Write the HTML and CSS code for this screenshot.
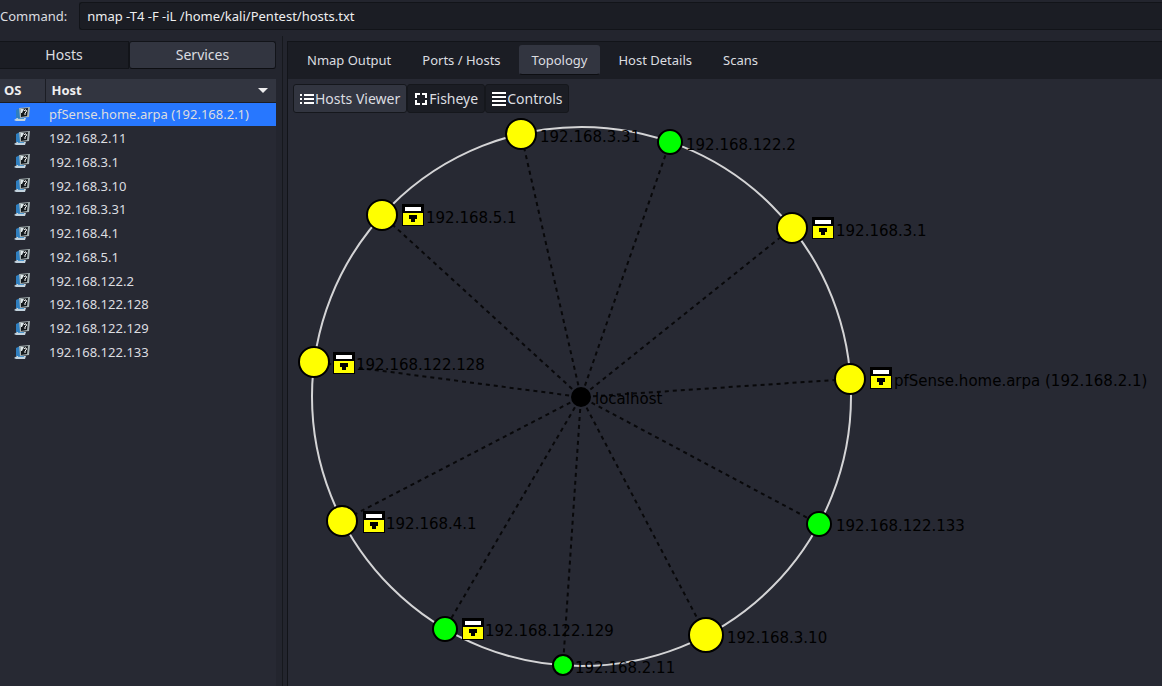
FILE: index.html
```html
<!DOCTYPE html>
<html lang="en">
<head>
    <meta charset="UTF-8">
    <meta name="viewport" content="width=device-width, initial-scale=1.0">
    <title>Zenmap</title>
    <link rel="stylesheet" href="styles.css">
</head>
<body>
    <!-- Shared icons -->
    <svg class="symbols" aria-hidden="true">
        <symbol id="unknown-os" viewBox="0 0 17 15">
            <path d="M2 3l4-2v10H2z" fill="#2f7fc0"/>
            <path d="M0 13l3-2h9l-1 3H2z" fill="#c3d3de"/>
            <path d="M4 11h6v1H4z" fill="#4b94cc"/>
            <path d="M5 1l11-1-1 10-9 1z" fill="#a9b4b5"/>
            <path d="M7 2l7-1-1 8-6 1z" fill="#14191c"/>
            <path d="M7 2h3L8 6H7z" fill="#dfe8ea"/>
            <path d="M10 4q1-2 2-1t0 2l-1 1v2" fill="none" stroke="#fff"/>
        </symbol>
        <symbol id="lock" viewBox="0 0 22 22">
            <path d="M0 0h22v22H0z" fill="#000"/>
            <path d="M3 3h16v4H3z" fill="#fff"/>
            <path d="M1 9h20v12H1z" fill="#ff0"/>
            <path d="M7 11h8v4h-2v3H9v-3H7z" fill="#000"/>
        </symbol>
    </svg>

    <form class="command-bar">
        <label for="command">Command:</label>
        <input type="text" id="command" value="nmap -T4 -F -iL /home/kali/Pentest/hosts.txt">
    </form>

    <main class="panes">
        <aside class="sidebar">
            <div class="mode">
                <button type="button" class="mode-button">Hosts</button>
                <button type="button" class="mode-button raised">Services</button>
            </div>
            <div class="host-list">
                <table class="hosts">
                    <thead>
                        <tr>
                            <th class="os">OS</th>
                            <th><div class="sort">Host <span class="arrow"></span></div></th>
                        </tr>
                    </thead>
                    <tbody>
                        <tr class="selected"><td><svg class="os-icon"><use href="#unknown-os"/></svg></td><td>pfSense.home.arpa (192.168.2.1)</td></tr>
                        <tr><td><svg class="os-icon"><use href="#unknown-os"/></svg></td><td>192.168.2.11</td></tr>
                        <tr><td><svg class="os-icon"><use href="#unknown-os"/></svg></td><td>192.168.3.1</td></tr>
                        <tr><td><svg class="os-icon"><use href="#unknown-os"/></svg></td><td>192.168.3.10</td></tr>
                        <tr><td><svg class="os-icon"><use href="#unknown-os"/></svg></td><td>192.168.3.31</td></tr>
                        <tr><td><svg class="os-icon"><use href="#unknown-os"/></svg></td><td>192.168.4.1</td></tr>
                        <tr><td><svg class="os-icon"><use href="#unknown-os"/></svg></td><td>192.168.5.1</td></tr>
                        <tr><td><svg class="os-icon"><use href="#unknown-os"/></svg></td><td>192.168.122.2</td></tr>
                        <tr><td><svg class="os-icon"><use href="#unknown-os"/></svg></td><td>192.168.122.128</td></tr>
                        <tr><td><svg class="os-icon"><use href="#unknown-os"/></svg></td><td>192.168.122.129</td></tr>
                        <tr><td><svg class="os-icon"><use href="#unknown-os"/></svg></td><td>192.168.122.133</td></tr>
                    </tbody>
                </table>
            </div>
        </aside>

        <section class="content">
            <nav class="tabs">
                <button type="button" class="tab">Nmap Output</button>
                <button type="button" class="tab">Ports / Hosts</button>
                <button type="button" class="tab active">Topology</button>
                <button type="button" class="tab">Host Details</button>
                <button type="button" class="tab">Scans</button>
            </nav>

            <div class="toolbar">
                <button type="button" class="tool raised">
                    <svg width="14" height="14" viewBox="0 0 14 14" fill="#fff"><path d="M0 2h2v2H0zM0 6h2v2H0zM0 10h2v2H0zM4 2h10v2H4zM4 6h10v2H4zM4 10h10v2H4z"/></svg>
                    Hosts Viewer
                </button>
                <button type="button" class="tool">
                    <svg width="14" height="14" viewBox="0 0 14 14" fill="none" stroke="#fff" stroke-width="2"><path d="M2 6V2h4M8 2h4v4M12 8v4H8M6 12H2V8"/></svg>
                    Fisheye
                </button>
                <button type="button" class="tool">
                    <svg width="14" height="14" viewBox="0 0 14 14" fill="#fff"><path d="M0 0h14v2H0zM0 4h14v2H0zM0 8h14v2H0zM0 12h14v2H0z"/></svg>
                    Controls
                </button>
            </div>

            <svg class="topology">
                <circle class="ring" cx="293.5" cy="283.5" r="269.5"/>
                <g class="routes">
                    <path d="M293 284L233 21"/>
                    <path d="M293 284L382 29"/>
                    <path d="M293 284L504 115"/>
                    <path d="M293 284L562 266"/>
                    <path d="M293 284L531 411"/>
                    <path d="M293 284L418 522"/>
                    <path d="M293 284L275 552"/>
                    <path d="M293 284L157 516"/>
                    <path d="M293 284L54 408"/>
                    <path d="M293 284L26 249"/>
                    <path d="M293 284L94 102"/>
                </g>
                <g class="nodes">
                    <circle class="few" cx="233" cy="21" r="15"/>
                    <circle class="none" cx="382" cy="29" r="12"/>
                    <circle class="few" cx="504" cy="115" r="15"/>
                    <circle class="few" cx="562" cy="266" r="15"/>
                    <circle class="none" cx="531" cy="411" r="12"/>
                    <circle class="few" cx="418" cy="522" r="17"/>
                    <circle class="none" cx="275" cy="552" r="10"/>
                    <circle class="none" cx="157" cy="516" r="12"/>
                    <circle class="few" cx="54" cy="408" r="15"/>
                    <circle class="few" cx="26" cy="249" r="15"/>
                    <circle class="few" cx="94" cy="102" r="15"/>
                    <circle cx="293" cy="284" r="9"/>
                </g>
                <use href="#lock" x="524" y="104" width="22" height="22"/>
                <use href="#lock" x="582" y="254" width="22" height="22"/>
                <use href="#lock" x="174" y="505" width="22" height="22"/>
                <use href="#lock" x="75" y="398" width="22" height="22"/>
                <use href="#lock" x="45" y="239" width="22" height="22"/>
                <use href="#lock" x="114" y="91" width="22" height="22"/>
                <g class="names">
                    <text x="252" y="29">192.168.3.31</text>
                    <text x="398" y="37">192.168.122.2</text>
                    <text x="548" y="123">192.168.3.1</text>
                    <text x="606" y="273">pfSense.home.arpa (192.168.2.1)</text>
                    <text x="548" y="418">192.168.122.133</text>
                    <text x="439" y="530">192.168.3.10</text>
                    <text x="287" y="560">192.168.2.11</text>
                    <text x="197" y="523">192.168.122.129</text>
                    <text x="98" y="416">192.168.4.1</text>
                    <text x="68" y="257">192.168.122.128</text>
                    <text x="138" y="110">192.168.5.1</text>
                    <text x="307" y="291">localhost</text>
                </g>
            </svg>
        </section>
    </main>
</body>
</html>
```
FILE: styles.css
```css
* {
    box-sizing: border-box;
}

body {
    margin: 0;
    height: 100vh;
    display: flex;
    flex-direction: column;
    overflow: hidden;
    background-color: #23252e;
    color: #dcdde0;
    font-family: "Noto Sans", sans-serif;
    font-size: 13px;
    line-height: 20px;
}

button, input {
    font: inherit;
    color: inherit;
}

.symbols {
    display: none;
}

/* Command line */
.command-bar {
    display: flex;
    align-items: center;
    gap: 12px;
    padding: 2px 0 0;
}

.command-bar input {
    flex: 1;
    height: 28px;
    padding: 0 7px;
    border: 1px solid #121419;
    border-right: 0;
    border-radius: 3px 0 0 3px;
    background-color: #1b1d24;
    color: #eeeeef;
}

.panes {
    flex: 1;
    display: flex;
    min-height: 0;
    padding-top: 6px;
}

/* Host list */
.sidebar {
    width: 283px;
    flex: none;
    display: flex;
    flex-direction: column;
    padding: 5px 6px 0 0;
    border-right: 1px solid #16181d;
}

.mode {
    display: flex;
    height: 28px;
    margin-bottom: 10px;
}

.mode-button {
    flex: 1;
    padding: 0;
    border: 1px solid #121419;
    border-radius: 3px;
    background-color: #1b1d24;
    font-size: 14px;
}

.mode-button:first-child {
    flex: none;
    width: 129px;
    border-left: 0;
    border-radius: 0;
}

.raised, .mode-button.raised {
    background-color: #323540;
    border-bottom-color: #0d0e12;
}

.host-list {
    flex: 1;
    background-color: #272933;
}

.hosts {
    width: 100%;
    height: 285px;
    border-collapse: collapse;
    text-align: left;
}

.hosts th {
    height: 23px;
    padding: 0 6px;
    background-color: #323540;
    border-bottom: 1px solid #1b1d24;
    color: #eeeeef;
}

.hosts .os {
    width: 45px;
    padding: 0 4px;
    border-right: 1px solid #1b1d24;
}

.sort {
    display: flex;
    align-items: center;
    justify-content: space-between;
}

.arrow {
    margin-right: 2px;
    border: 5px solid transparent;
    border-top-color: #eeeeef;
    border-bottom: 0;
}

.hosts td {
    padding: 0 4px;
}

.hosts td:first-child {
    padding-left: 14px;
}

.selected {
    background-color: #2777ff;
}

.os-icon {
    display: block;
    width: 17px;
    height: 15px;
}

/* Result tabs */
.content {
    flex: 1;
    min-width: 0;
    display: flex;
    flex-direction: column;
    margin: 5px 0 0 4px;
    border-left: 1px solid #121419;
    background-color: #272933;
}

.tabs {
    display: flex;
    gap: 5px;
    padding: 3px 6px 4px;
    border-top: 1px solid #121419;
    background-color: #1b1d24;
}

.tab {
    height: 30px;
    padding: 0 12px;
    border: 1px solid transparent;
    border-radius: 3px;
    background: none;
}

.tab.active {
    background-color: #323540;
    border-bottom-color: #0d0e12;
}

.toolbar {
    display: flex;
    padding: 5px 5px 0;
}

.tool {
    display: flex;
    align-items: center;
    gap: 1px;
    height: 29px;
    padding: 0 6px;
    border: 1px solid #15171c;
    border-radius: 3px;
    background-color: #1b1d24;
    font-size: 14px;
}

.tool.raised {
    background-color: #323540;
}

/* Network graph */
.topology {
    flex: 1;
    width: 100%;
    min-height: 0;
}

.ring {
    fill: none;
    stroke: #d4d4d6;
    stroke-width: 2;
}

.routes path {
    stroke: #08080a;
    stroke-width: 2;
    stroke-dasharray: 4 4;
    stroke-dashoffset: 4;
}

.nodes circle {
    stroke: #000;
    stroke-width: 2;
}

.nodes .few {
    fill: #ff0;
}

.nodes .none {
    fill: #0f0;
}

.names {
    font-family: "DejaVu Sans", sans-serif;
    font-size: 15px;
}
```
